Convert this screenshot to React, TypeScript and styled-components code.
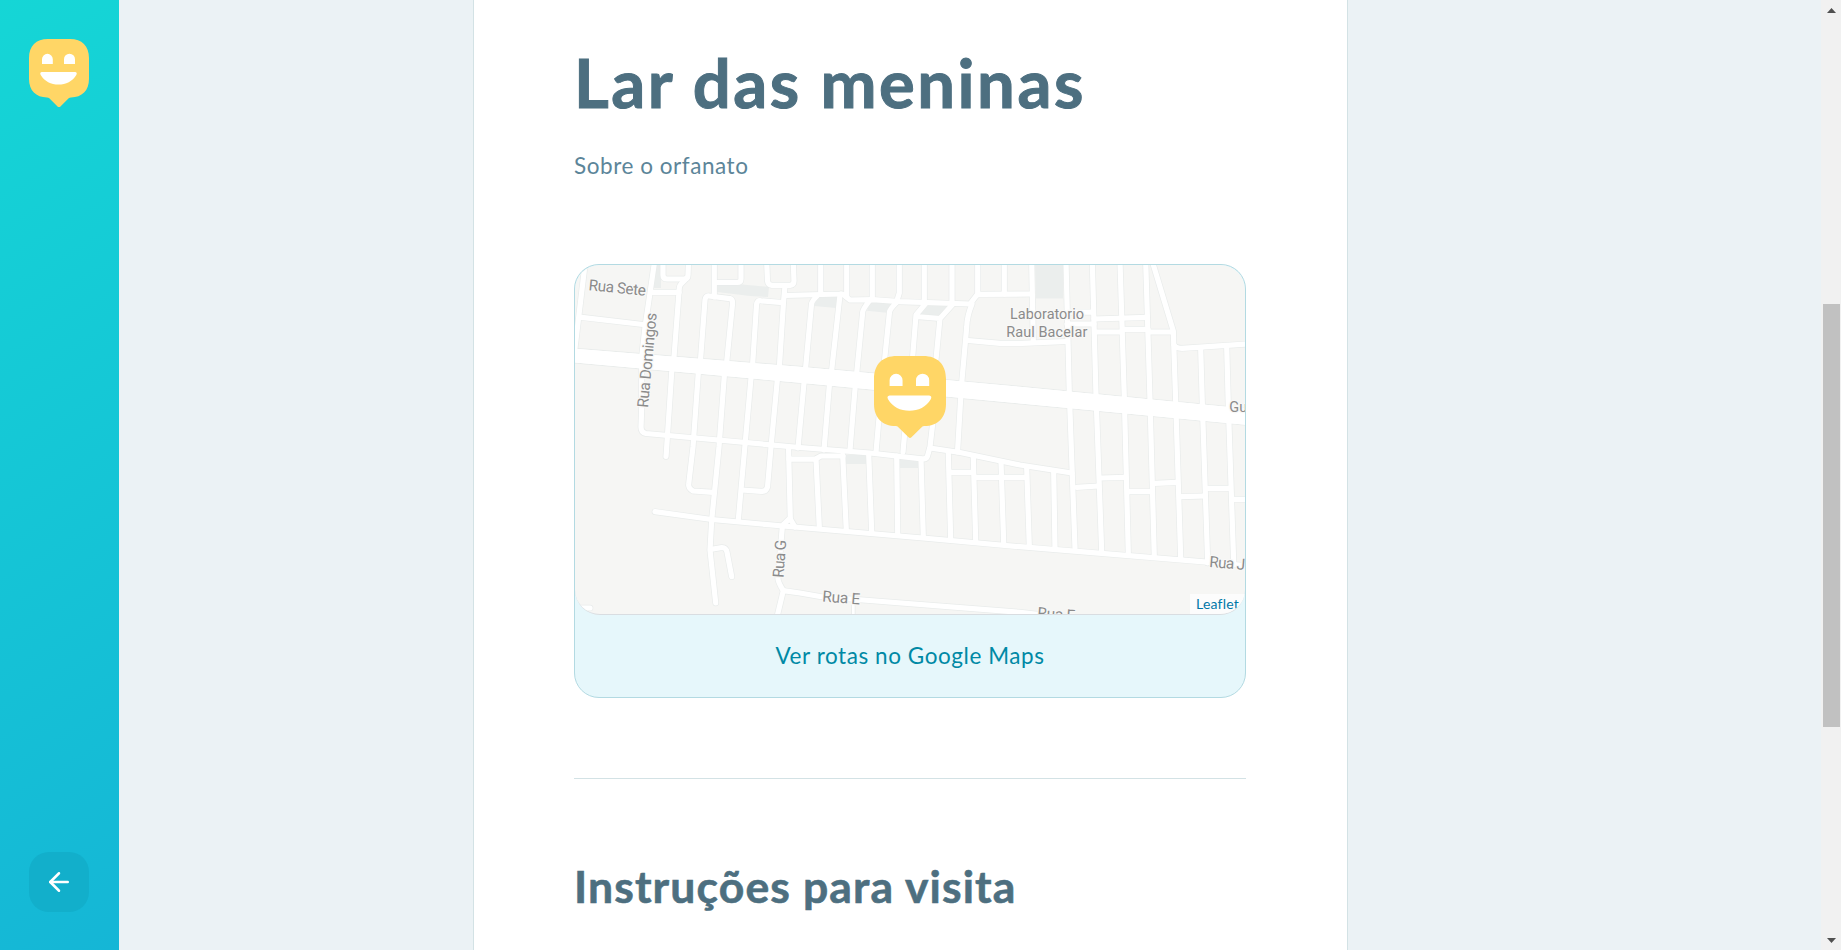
import React from "react";
import styled, { createGlobalStyle } from "styled-components";
import { FiArrowLeft } from "react-icons/fi";

const GlobalStyle = createGlobalStyle`
  * { box-sizing: border-box; margin: 0; padding: 0; }
  body {
    background: #ebf2f5;
    font-family: Lato, "Open Sans", sans-serif;
    overflow: hidden;
  }
`;

const Page = styled.div`
  display: grid;
  grid-template-columns: 119px 1fr 20px;
  height: 950px;
  overflow: hidden;
`;

const Sidebar = styled.aside`
  display: flex;
  flex-direction: column;
  align-items: center;
  justify-content: space-between;
  padding: 39px 30px 38px 29px;
  background: linear-gradient(329.54deg, #15b6d6 0%, #15d6d6 100%);
`;

const BackButton = styled.button`
  display: flex;
  align-items: center;
  justify-content: center;
  width: 60px;
  height: 60px;
  border: 0;
  border-radius: 20px;
  background: #12afcb;
  color: #fff;
`;

const Card = styled.main`
  width: 875px;
  height: 950px;
  margin-left: 354px;
  padding: 37px 101px 0 100px;
  background: #fff;
  border: solid #d3e2e5;
  border-width: 0 1px;
  overflow: hidden;
`;

const Title = styled.h1`
  font-size: 67px;
  font-weight: 700;
  line-height: 90px;
  letter-spacing: 2.5px;
  white-space: nowrap;
  color: #4d6f80;
  -webkit-text-stroke: 1px #4d6f80;
`;

const About = styled.p`
  margin-top: 21px;
  font-size: 22.5px;
  line-height: 36px;
  letter-spacing: 0.55px;
  color: #5c8599;
`;

const MapCard = styled.section`
  margin-top: 80px;
  height: 434px;
  border: 1px solid #b3dae2;
  border-radius: 25px;
  background: #e6f7fb;
  overflow: hidden;
`;

const MapView = styled.div`
  position: relative;
  height: 350px;
  border-radius: 25px;
  border-bottom: 1px solid #d9dde1;
  background: #f6f6f4;
  overflow: hidden;

  & > svg { display: block; }
`;

const Pin = styled.div`
  position: absolute;
  left: 299px;
  top: 91px;
`;

const Attribution = styled.a`
  position: absolute;
  right: 0;
  bottom: 0;
  width: 55px;
  height: 20px;
  padding-left: 6px;
  background: rgba(255, 255, 255, 0.7);
  font-size: 14px;
  line-height: 19px;
  letter-spacing: 0.2px;
  color: #0078a8;
`;

const MapFooter = styled.footer`
  display: flex;
  justify-content: center;
  padding-top: 24px;
  font-size: 22.5px;
  line-height: 34px;
  letter-spacing: 0.56px;
  white-space: nowrap;
  color: #0089a5;
`;

const Divider = styled.hr`
  height: 1px;
  margin-top: 80px;
  border: 0;
  background: #d3e2e5;
`;

const Subtitle = styled.h2`
  margin-top: 78px;
  font-size: 44.5px;
  font-weight: 700;
  line-height: 58px;
  letter-spacing: 1.12px;
  white-space: nowrap;
  color: #4d6f80;
  -webkit-text-stroke: 0.6px #4d6f80;
`;

const ScrollTrack = styled.div`
  display: flex;
  flex-direction: column;
  align-items: center;
  justify-content: space-between;
  padding: 8px 0 7px;
  background: #f1f1f1;
`;

const ScrollThumb = styled.div`
  width: 17px;
  height: 423px;
  margin: 291px 0 auto 1px;
  background: #c1c1c1;
`;

const Happy = ({ width }: { width: number }) => (
  <svg width={width} height={(width * 68.4) / 60} viewBox="0 0 60 68.4" display="block">
    <path
      fill="#ffd666"
      d="M19 0H41C53 0 60 7 60 19V40C60 51.5 53 58.4 42 58.4C41 58.4 40.3 58.7 39.7 59.3L31.2 67.7Q30 68.8 28.8 67.7L20.3 59.3C19.7 58.7 19 58.4 18 58.4C7 58.4 0 51.5 0 40V19C0 7 7 0 19 0Z"
    />
    <path
      fill="#fff"
      d="M13 25V20.2A5.4 5.4 0 0 1 23.8 20.2V25ZM35 25V20.2A5.5 5.5 0 0 1 46 20.2V25ZM13 33H46Q48.7 33.4 47.3 36C43.5 42.4 37 45.6 29.5 45.6C22 45.6 15.5 42.4 11.7 36Q10.3 33.4 13 33Z"
    />
  </svg>
);

const streets = [
  "M585.3 262L575 348",
  "M581.5 317.3L643 324.5",
  "M654.5 262L650 293L645 327L641.7 357L641.7 408L641 427Q641 432.5 646 433.5L800 447.5L870 453L922 458.8Q926.5 459.5 927.5 456L930 447L936 395",
  "M651 292.3H679",
  "M663 262V275Q663 279 667 279H684Q688 279 688 275L688.5 262",
  "M687 278L681 284Q679.6 285.5 679.3 288L674 357M671.7 372L666.5 450L666 456.5",
  "M714.3 262V297M714.3 282.5H737Q741 282.5 741 279V262",
  "M700.5 360L705 300Q705.5 295.5 709 296L730 298.6Q733 299.5 732.5 304L726.7 362",
  "M698.3 373L693 447L688.7 484Q688 488 693 491L713 492.3",
  "M724.3 376L719 447L711.7 520L710 550L715.7 603",
  "M711.7 549.3L722 547.5Q726 547.5 727 552L731.7 576.7",
  "M752.7 363L756.5 305Q757 300 761 300.8L783 302.7",
  "M751 378L745 445L738.3 520",
  "M766.7 262L767.5 281Q768 285 772 285.3H790Q794 285 794 281L793.3 262",
  "M785 286L783.5 302L779.5 365M777.3 380L771 447L767.5 487Q766 492 761 491.3L741.7 490",
  "M785 295.5L840 294Q843 293.5 845 296L850 300L873 299.7L900 301.7L970 304L976.5 295.5Q978 294.3 980 294.3L1031.7 294",
  "M820.7 262V294M846.7 262V297M872.3 262V299M899.3 262V293L896.5 302M924.3 262V302M952 262V304M977.7 262V294M1004.3 262V294",
  "M1031.7 262L1033.3 342",
  "M805.7 367L811.5 304Q812 301 817 296",
  "M831.7 370L840 295",
  "M856.7 373L862.7 312Q863 309 870 300",
  "M883 375L889.5 312Q890 309 896.5 302.5",
  "M911 377L916 315L926 303M916 316.5L940 318.5L953 304M940 318L934 380",
  "M961.7 383L966.7 327Q967 316 972 304",
  "M968 340.5L1000 343.3H1022L1066.7 341.5",
  "M804 383L798 448M829.3 386L824 450M855 389L850 450M881 395L876 452M908 395L903 452M960.7 398L957.5 452",
  "M930 448L960 452.5L1020 465L1072 473",
  "M1066 262L1069.3 393L1075 548",
  "M1092.3 262L1096 395L1101.7 552",
  "M1120 262L1124.3 397L1128.3 553",
  "M1145.7 262L1150 400L1154.3 557",
  "M1152.5 262L1173.3 331L1175.7 402L1180.7 558",
  "M1174 345Q1176 348.3 1182 348.3L1248 344",
  "M1200.7 349L1202.3 403L1207.7 563",
  "M1226.7 347L1228.3 405L1233.7 563",
  "M1067 312.2H1092M1067 324H1094M1094 319L1147 317.3M1095 332H1121L1124 329.3H1148M1149 332H1173",
  "M1076.7 487.3L1098.3 486M1101.7 478L1125 477.3M1128.3 491.7H1151.7M1155 483.3L1176.7 482.3M1181.7 496.7L1205 496M1208 488.3H1230M1233 499.3H1248",
  "M655 511.7L711.7 519.5L800 527.5L923 538L1020 546.7L1210 562.3L1248 566",
  "M1026.7 468L1029.3 546M1053.7 472L1055 548M976.7 477.3H1025M951 472.3H973",
  "M948.3 453L950.7 540M973.3 457L975.7 541M1001 462L1003.7 543M921 459L923.3 537",
  "M896.7 456L897.7 534M868.7 454L871.7 532M842.7 455L846.3 530M816 459L819.3 527",
  "M789 459.2H815L821 456H843",
  "M788.5 447L790.3 519L795 527M790.3 518L783 525",
  "M782.3 527L778 578Q777.5 581 783.3 590.7L777 617",
  "M783.3 590.7L800 593L820 596.5L863 600L1020 612.3L1060 617",
  "M576 608H590",
];

const blocks = [
  "M655 264H661V288H653Z",
  "M717 285L737 284L769 287L768 297L750 296L717 292Z",
  "M818 297H838L836 308L814 306Z",
  "M870 302H892L887 312.7L867 310.7Z",
  "M923 304L951 303L941 316L919 314Z",
  "M1035 264H1063V298.5H1036Z",
  "M845 455H866V464H846Z",
  "M899 459H919V468H899.5Z",
];

const labels: { text: string; x: number; y: number; len: number; angle?: number; size?: number }[] = [
  { text: "Rua Sete", x: 588.3, y: 290.2, len: 57.5, angle: 5.5, size: 15.5 },
  { text: "Rua Domingos", x: 648, y: 408, len: 95, angle: -84.8, size: 15.5 },
  { text: "Laboratorio", x: 1010, y: 319, len: 74, size: 14.5 },
  { text: "Raul Bacelar", x: 1006.3, y: 337, len: 81, size: 14.5 },
  { text: "Gu", x: 1229.3, y: 411.5, len: 18, size: 14.5 },
  { text: "Rua G", x: 783.5, y: 578, len: 38, angle: -86, size: 15.5 },
  { text: "Rua E", x: 822, y: 601.5, len: 38, angle: 4.5, size: 15.5 },
  { text: "Rua E", x: 1037, y: 618, len: 38, angle: 4.5, size: 15.5 },
  { text: "Rua J", x: 1209, y: 567, len: 36, angle: 4.5, size: 15.5 },
];

const StreetMap = () => (
  <svg width="670" height="350" viewBox="575 265 670 350">
    <g fill="#ebeeed">
      {blocks.map((d) => <path key={d} d={d} />)}
    </g>
    <g fill="none" stroke="#e9eceb" strokeWidth="6.6" strokeLinecap="round" strokeLinejoin="round">
      {streets.map((d) => <path key={d} d={d} />)}
      <path d="M853.3 600V617" strokeWidth="4.5" />
    </g>
    <path d="M570 347.8L800 366.3L1020 386.3L1250 408.6V425.6L1020 404L800 383.3L570 362.6Z" fill="#fff" stroke="#e9eceb" />
    <g fill="none" stroke="#fff" strokeWidth="5.2" strokeLinecap="round" strokeLinejoin="round">
      {streets.map((d) => <path key={d} d={d} />)}
      <path d="M853.3 600V617" strokeWidth="2.8" />
    </g>
    <path d="M570 348.3L800 366.8L1020 386.8L1250 409.1V425.1L1020 403.5L800 382.8L570 362.1Z" fill="#fff" />
    <g
      fill="#8b8b8b"
      stroke="#f8f8f7"
      strokeWidth="2.5"
      strokeLinejoin="round"
      paintOrder="stroke"
      fontFamily="Roboto, sans-serif"
    >
      {labels.map((l) => (
        <text
          key={l.text + l.x}
          fontSize={l.size}
          textLength={l.len}
          transform={`translate(${l.x} ${l.y}) rotate(${l.angle ?? 0})`}
        >
          {l.text}
        </text>
      ))}
    </g>
  </svg>
);

export default function App() {
  return (
    <>
      <GlobalStyle />
      <Page>
        <Sidebar>
          <Happy width={60} />
          <BackButton type="button" aria-label="Voltar">
            <FiArrowLeft size={30} />
          </BackButton>
        </Sidebar>
        <Card>
          <Title>Lar das meninas</Title>
          <About>Sobre o orfanato</About>
          <MapCard>
            <MapView>
              <StreetMap />
              <Pin>
                <Happy width={72} />
              </Pin>
              <Attribution>Leaflet</Attribution>
            </MapView>
            <MapFooter>Ver rotas no Google Maps</MapFooter>
          </MapCard>
          <Divider />
          <Subtitle>Instruções para visita</Subtitle>
        </Card>
        <ScrollTrack>
          <svg width="9" height="5" viewBox="0 0 9 5"><path d="M0 5L4.5 0L9 5Z" fill="#505050" /></svg>
          <ScrollThumb />
          <svg width="9" height="5" viewBox="0 0 9 5"><path d="M0 0L4.5 5L9 0Z" fill="#505050" /></svg>
        </ScrollTrack>
      </Page>
    </>
  );
}
